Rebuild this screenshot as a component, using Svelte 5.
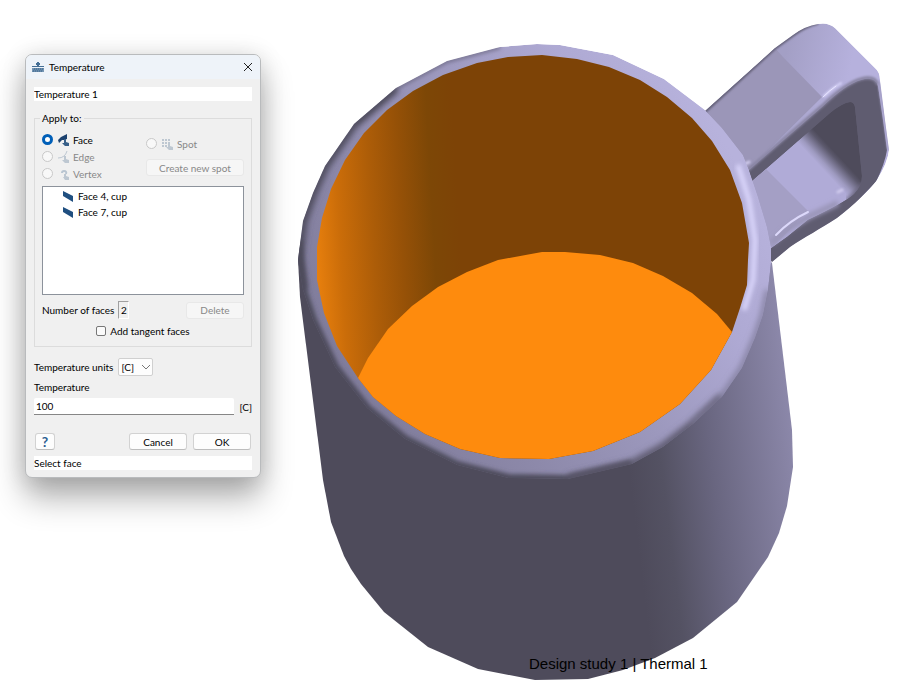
<script lang="ts">
  // Form state
  let title = $state('Temperature 1');
  let target = $state('face');
  let tangent = $state(false);
  let units = $state('C');
  let temperature = $state('100');
  let open = $state(true);

  let faces = $state(['Face 4, cup', 'Face 7, cup']);

  // Rim outlines of the cup, shared by several shapes
  const outerTop =
    '771,263 771,247 767,227 758,197 749,170 743,155 722,128 705,110 664,79 613,55 560,45 537,44 500,47 447,61 396,88 354,124 325,166 313,193 303,221 298,260';
  const outerLow =
    '303,290 313,320 335,367 367,408 405,439 457,465 508,478 568,479 632,464 663,447 693,424 722,397 742,368 755,338 763,315 768,290';
  const innerLow =
    '373,397 396,416 425,434 460,449 500,458 549,459 593,451 640,432 680,404 711,370 732,332';
  const inner =
    '542,55 508,57 477,63 443,75 413,91 387,110 364,133 345,160 331,189 322,218 317,247 317,280 324,313 337,346 358,378 ' +
    innerLow +
    ' 740,308 747,285 748,260 749,243 742,203 730,170 712,141 692,118 667,97 640,80 609,67 577,59';
  const floor =
    '732,332 717,314 692,293 663,276 633,263 600,255 565,252 542,252 498,260 467,272 438,287 412,306 388,329 368,358 358,378 ' +
    innerLow;
  const body =
    '298,260 300,297 323,480 331,522 344,556 351,569 361,584 384,612 428,647 478,669 535,680 588,679 623,670 655,658 693,638 737,602 768,557 779,533 787,506 791,480 793,467 792,430 772,263 700,180 400,180';
  const handle =
    'M705 111L775 48L793 35Q805 26 818 24Q828 22 835 28L875 68Q880 72 880 80L885 120L889 150Q888 162 877 180Q864 197 837 218C820 229 805 237 790 247L772 262L740 220L720 150Z';
  const hole =
    'M752 181L830 113Q842 103 850 102Q854 102 855 107L862 176Q862 186 854 194Q846 202 808 220L787 237L770 249L740 220Z';
</script>

<main class="workspace">
  <svg class="scene" viewBox="0 0 923 693" preserveAspectRatio="xMinYMin meet" aria-label="Cup model">
    <defs>
      <linearGradient id="body" gradientUnits="userSpaceOnUse" x1="630" y1="480" x2="795" y2="460">
        <stop offset="0" stop-color="#4e4b5b" />
        <stop offset="0.2" stop-color="#545263" />
        <stop offset="0.5" stop-color="#696680" />
        <stop offset="1" stop-color="#8b87a9" />
      </linearGradient>
      <linearGradient id="wall" gradientUnits="userSpaceOnUse" x1="316" y1="250" x2="460" y2="242">
        <stop offset="0" stop-color="#e77f0d" />
        <stop offset="0.17" stop-color="#cb6d09" />
        <stop offset="0.4" stop-color="#ad5d08" />
        <stop offset="0.6" stop-color="#965107" />
        <stop offset="0.82" stop-color="#7d4706" />
        <stop offset="1" stop-color="#7d4306" />
      </linearGradient>
      <linearGradient id="rim" gradientUnits="userSpaceOnUse" x1="330" y1="400" x2="730" y2="150">
        <stop offset="0" stop-color="#7d7997" />
        <stop offset="0.3" stop-color="#8d89aa" />
        <stop offset="0.55" stop-color="#9c98bd" />
        <stop offset="0.8" stop-color="#aea9d3" />
        <stop offset="1" stop-color="#b7b2dc" />
      </linearGradient>
      <linearGradient id="handleTop" gradientUnits="userSpaceOnUse" x1="785" y1="55" x2="850" y2="70">
        <stop offset="0" stop-color="#a39fc5" />
        <stop offset="1" stop-color="#b6b1dd" />
      </linearGradient>
      <linearGradient id="hole" gradientUnits="userSpaceOnUse" x1="817" y1="163" x2="832" y2="149">
        <stop offset="0" stop-color="#b0abd7" />
        <stop offset="0.25" stop-color="#9e9ac0" />
        <stop offset="0.8" stop-color="#5c596d" />
        <stop offset="1" stop-color="#4e4b5b" />
      </linearGradient>
      <filter id="soft1" x="-20%" y="-20%" width="140%" height="140%"><feGaussianBlur stdDeviation="1" /></filter>
      <filter id="soft2" x="-20%" y="-20%" width="140%" height="140%"><feGaussianBlur stdDeviation="2" /></filter>
      <filter id="soft3" x="-20%" y="-20%" width="140%" height="140%"><feGaussianBlur stdDeviation="3" /></filter>
      <clipPath id="rimClip"><polygon points="{outerTop} {outerLow}" /></clipPath>
      <clipPath id="handleClip"><path d={handle} /></clipPath>
      <clipPath id="holeClip"><path d={hole} /></clipPath>
    </defs>

    <!-- Handle -->
    <g clip-path="url(#handleClip)">
      <path d={handle} fill="url(#handleTop)" />
      <polygon points="700,115 775,48 783,57 822,97 748,170" fill="#9b96b8" />
      <path d="M700 116L775 48L793 35Q805 26 818 23" fill="none" stroke="#5f5c72" stroke-width="3" filter="url(#soft1)" />
      <path d="M749 170L822 107Q846 84 861 80Q875 76 878 86L883 120L887 150Q885 163 876 182L837 222L770 272L730 220Z" fill="#5f5c70" />
      <path d="M748 170L822 106Q846 83 861 79Q875 75 878 85" fill="none" stroke="#8783a0" stroke-width="3" filter="url(#soft1)" />
      <path d="M879 82L885 120L889 150" fill="none" stroke="#a39ec4" stroke-width="3" filter="url(#soft1)" />
      <path d="M824 96Q832 88 841 83" fill="none" stroke="#dedaff" stroke-width="2" stroke-linecap="round" filter="url(#soft1)" />
      <path d="M823 97Q829 91 836 86" fill="none" stroke="#e8e5ff" stroke-linecap="round" />
    </g>
    <g clip-path="url(#holeClip)">
      <path d={hole} fill="url(#hole)" />
      <polygon points="740,190 766,169 808,211 770,250" fill="#a49fc5" />
      <path d="M850 204L868 186" stroke="#6c6880" stroke-width="12" filter="url(#soft2)" />
    </g>
    <path d="M771 243L788 229L810 216L838 203" fill="none" stroke="#9a95b8" stroke-width="6" filter="url(#soft2)" />
    <path d="M776 235Q789 221 808 212" fill="none" stroke="#dcd8fa" stroke-width="2" stroke-linecap="round" />
    <path d="M838 192L842 190M745 164L749 162" stroke="#d0cbed" stroke-width="3" stroke-linecap="round" filter="url(#soft1)" />

    <!-- Cup -->
    <polygon points={body} fill="url(#body)" />
    <g clip-path="url(#rimClip)">
      <polygon points="{outerTop} {outerLow}" fill="url(#rim)" />
      <polyline points="500,47 447,61 396,88 354,124" fill="none" stroke="#67647c" stroke-width="3" filter="url(#soft2)" />
      <polyline points="396,88 354,124 325,166 313,193 303,221 298,260 303,290" fill="none" stroke="#4e4b5b" stroke-width="9" filter="url(#soft3)" />
      <polyline points="298,240 303,290 313,320 335,367 367,408 405,439 457,465 508,478 568,479 632,464" fill="none" stroke="#4e4b5b" stroke-width="8" filter="url(#soft2)" />
      <polyline points="568,479 632,464 663,447 693,424 722,397" fill="none" stroke="#5a576a" stroke-width="8" filter="url(#soft3)" />
      <polyline points="693,424 722,397 742,368 755,338 763,315 768,290" fill="none" stroke="#7d7997" stroke-width="5" filter="url(#soft3)" />
      <polyline points="738,165 749,200 755,240 753,280 744,310" fill="none" stroke="#dad6fb" stroke-width="5" filter="url(#soft2)" />
    </g>
    <polygon points={inner} fill="url(#wall)" />
    <polygon points={floor} fill="#fe8b0d" />
  </svg>

  <p class="study-label">Design study 1 | Thermal 1</p>

  {#if open}
    <section class="dialog" role="dialog" aria-labelledby="dialog-title">
      <header class="titlebar">
        <svg class="title-icon" viewBox="0 0 12 12" aria-hidden="true">
          <path d="M6 1V5M4 3H8" fill="none" stroke="#456f96" stroke-width="2" />
          <path d="M0 5.5H12" stroke="#456f96" />
          <path d="M0 7H12V11H0Z" fill="#a9bed1" />
          <path d="M1 7V11L3 7V11L5 7V11L7 7V11L9 7V11L11 7V11" fill="none" stroke="#456f96" />
        </svg>
        <h1 id="dialog-title">Temperature</h1>
        <button type="button" class="close-btn" aria-label="Close" onclick={() => (open = false)}>
          <svg viewBox="0 0 10 10" aria-hidden="true"><path d="M1 1L9 9M9 1L1 9" fill="none" stroke="#222" /></svg>
        </button>
      </header>

      <form class="content" onsubmit={(e) => e.preventDefault()}>
        <input class="plain-input" type="text" aria-label="Name" bind:value={title} />

        <fieldset>
          <legend>Apply to:</legend>
          <div class="targets">
            <div class="target-list">
              <label class="option">
                <input type="radio" name="target" value="face" bind:group={target} />
                <svg viewBox="0 0 12 12" aria-hidden="true">
                  <path d="M0 6L3 3L9 0V5L6 6L4 6L1 9Z" fill="#1c426f" />
                  <path d="M6 5H8V8L11 9V12H7L4 9L6 9Z" fill="#375f88" />
                </svg>
                Face
              </label>
              <label class="option disabled">
                <input type="radio" name="target" value="edge" disabled />
                <svg viewBox="0 0 12 12" aria-hidden="true">
                  <path d="M0 7Q7 7 9 0" fill="none" stroke="#bdc7d1" />
                  <path d="M6 5H8V8L11 9V12H7L4 9L6 9Z" fill="#bdc7d1" />
                </svg>
                Edge
              </label>
              <label class="option disabled">
                <input type="radio" name="target" value="vertex" disabled />
                <svg viewBox="0 0 12 12" aria-hidden="true">
                  <path d="M4 5Q4 3 6 3Q9 3 8 6" fill="none" stroke="#b9c5d1" stroke-width="2" />
                  <path d="M6 6H8V8L11 9V12H7L5 9L6 9Z" fill="#bdc7d1" />
                </svg>
                Vertex
              </label>
            </div>
            <div class="spot-column">
              <label class="option disabled">
                <input type="radio" name="target" value="spot" disabled />
                <svg viewBox="0 0 12 12" aria-hidden="true">
                  <path d="M1 1V9M4 1V9M7 1V7" fill="none" stroke="#bdc7d1" stroke-width="2" stroke-dasharray="2 1" />
                  <path d="M6 5H8V8L11 9V12H7L4 9L6 9Z" fill="#bdc7d1" />
                </svg>
                Spot
              </label>
              <button type="button" class="btn" disabled>Create new spot</button>
            </div>
          </div>

          <ul class="face-list" aria-label="Selected faces">
            {#each faces as face}
              <li>
                <svg viewBox="0 0 10 12" aria-hidden="true"><path d="M0 1L10 6V12L0 6Z" fill="#1f4f80" /></svg>
                {face}
              </li>
            {/each}
          </ul>

          <div class="count-row">
            <span>Number of faces</span>
            <output>{faces.length}</output>
            <button type="button" class="btn delete-btn" disabled>Delete</button>
          </div>

          <label class="tangent-row">
            <input type="checkbox" bind:checked={tangent} />
            Add tangent faces
          </label>
        </fieldset>

        <div class="units-row">
          <label for="units">Temperature units</label>
          <span class="select-wrap">
            <select id="units" bind:value={units}>
              <option value="C">[C]</option>
              <option value="F">[F]</option>
              <option value="K">[K]</option>
            </select>
            <svg viewBox="0 0 8 5" aria-hidden="true"><path d="M0 0L4 4L8 0" fill="none" stroke="#777" /></svg>
          </span>
        </div>

        <label class="value-label" for="temperature">Temperature</label>
        <div class="value-row">
          <input id="temperature" type="text" bind:value={temperature} />
          <span>[{units}]</span>
        </div>

        <div class="actions">
          <button type="button" class="btn help-btn" aria-label="Help">?</button>
          <button type="button" class="btn action-btn" onclick={() => (open = false)}>Cancel</button>
          <button type="submit" class="btn action-btn">OK</button>
        </div>

        <input class="plain-input" type="text" aria-label="Status" value="Select face" readonly />
      </form>
    </section>
  {/if}
</main>

<style>
  :global(body) {
    margin: 0;
    background: #fff;
  }

  .workspace {
    position: relative;
    min-height: 100vh;
    overflow: hidden;
    font: 10px/14px Lato, 'Noto Sans', sans-serif;
    color: #000;
  }

  .workspace * {
    box-sizing: border-box;
  }

  .scene {
    display: block;
    width: 100%;
  }

  .study-label {
    position: absolute;
    left: 529px;
    bottom: 20px;
    margin: 0;
    font: 15px/18px 'Liberation Sans', Arial, sans-serif;
    color: #000;
    white-space: nowrap;
  }

  .dialog {
    position: absolute;
    left: 25px;
    top: 54px;
    width: 236px;
    border: 1px solid #b9bbbd;
    border-radius: 7px;
    background: #f0f0f0;
    box-shadow: 0 20px 32px rgba(0, 0, 0, 0.3), 0 2px 24px rgba(0, 0, 0, 0.14);
  }

  .titlebar {
    display: flex;
    align-items: center;
    gap: 5px;
    height: 24px;
    padding: 0 7px 0 6px;
    border-radius: 6px 6px 0 0;
    background: #eef3f9;
  }

  .title-icon {
    width: 12px;
    height: 12px;
  }

  h1 {
    flex: 1;
    margin: 0;
    font-size: 10px;
    font-weight: 400;
  }

  .close-btn {
    display: flex;
    padding: 0;
    border: 0;
    background: none;
  }

  .close-btn svg {
    width: 10px;
    height: 10px;
  }

  .content {
    display: flex;
    flex-direction: column;
    padding: 8px 8px 7px;
  }

  input,
  select,
  button {
    margin: 0;
    font: inherit;
    color: inherit;
  }

  .plain-input {
    width: 100%;
    height: 14px;
    padding: 0;
    border: 0;
    background: #fff;
  }

  fieldset {
    min-width: 0;
    margin: 10px 0 0;
    padding: 6px 7px;
    border: 1px solid #dcdcdc;
  }

  legend {
    height: 14px;
    margin-left: -2px;
    padding: 0 2px;
  }

  .targets {
    display: flex;
    justify-content: space-between;
  }

  .option {
    display: flex;
    align-items: center;
    gap: 3px;
    height: 17px;
  }

  .option svg {
    width: 12px;
    height: 12px;
  }

  .disabled {
    color: #888;
  }

  input[type='radio'] {
    appearance: none;
    width: 11px;
    height: 11px;
    margin-right: 2px;
    border: 1px solid #c8c8c8;
    border-radius: 50%;
    background: #f8f8f8;
  }

  input[type='radio']:checked {
    border: 3px solid #005fb8;
    background: #fff;
  }

  .spot-column {
    display: flex;
    flex-direction: column;
    gap: 7px;
    width: 98px;
    padding-top: 4px;
  }

  .btn {
    height: 17px;
    padding: 0;
    border: 1px solid #d2d2d2;
    border-bottom-color: #bdbdbd;
    border-radius: 3px;
    background: #fdfdfd;
    line-height: 14px;
  }

  .btn:disabled {
    border-color: #e8e8e8;
    background: #f6f6f6;
    color: #888;
  }

  .face-list {
    height: 109px;
    margin: 4px 0 0;
    padding: 1px 0 0 20px;
    border: 1px solid #8c929b;
    background: #fff;
    list-style: none;
  }

  .face-list li {
    display: flex;
    align-items: center;
    gap: 5px;
    height: 16px;
  }

  .face-list svg {
    width: 10px;
    height: 12px;
  }

  .count-row {
    display: flex;
    align-items: center;
    gap: 4px;
    margin-top: 6px;
  }

  output {
    width: 11px;
    border: 1px solid #fff;
    border-top-color: #a0a0a0;
    border-left-color: #a0a0a0;
    line-height: 16px;
    text-align: center;
  }

  .delete-btn {
    width: 58px;
    margin-left: auto;
  }

  .tangent-row {
    display: flex;
    align-items: center;
    justify-content: center;
    gap: 4px;
    height: 18px;
    margin-top: 3px;
  }

  input[type='checkbox'] {
    appearance: none;
    width: 10px;
    height: 10px;
    border: 1px solid #777;
    border-radius: 2px;
    background: #fafafa;
  }

  input[type='checkbox']:checked {
    background: #005fb8;
  }

  .units-row {
    display: flex;
    align-items: center;
    gap: 5px;
    margin-top: 11px;
  }

  .select-wrap {
    position: relative;
    display: flex;
  }

  select {
    appearance: none;
    width: 35px;
    height: 18px;
    padding: 0 2px;
    border: 1px solid #d0d0d0;
    border-radius: 2px;
    background: #fdfdfd;
  }

  .select-wrap svg {
    position: absolute;
    top: 7px;
    right: 3px;
    width: 8px;
    height: 5px;
    pointer-events: none;
  }

  .value-label {
    margin-top: 4px;
  }

  .value-row {
    display: flex;
    align-items: center;
    gap: 5px;
    margin-top: 4px;
  }

  .value-row input {
    flex: 1;
    min-width: 0;
    height: 17px;
    padding: 0 2px;
    border: 0;
    border-bottom: 1px solid #868686;
    border-radius: 2px 2px 0 0;
    background: #fff;
  }

  .actions {
    display: flex;
    gap: 6px;
    margin: 18px 1px 6px;
  }

  .help-btn {
    width: 20px;
    margin-right: auto;
    color: #2d5f92;
    font-size: 14px;
    font-weight: 700;
  }

  .action-btn {
    width: 58px;
  }
</style>
